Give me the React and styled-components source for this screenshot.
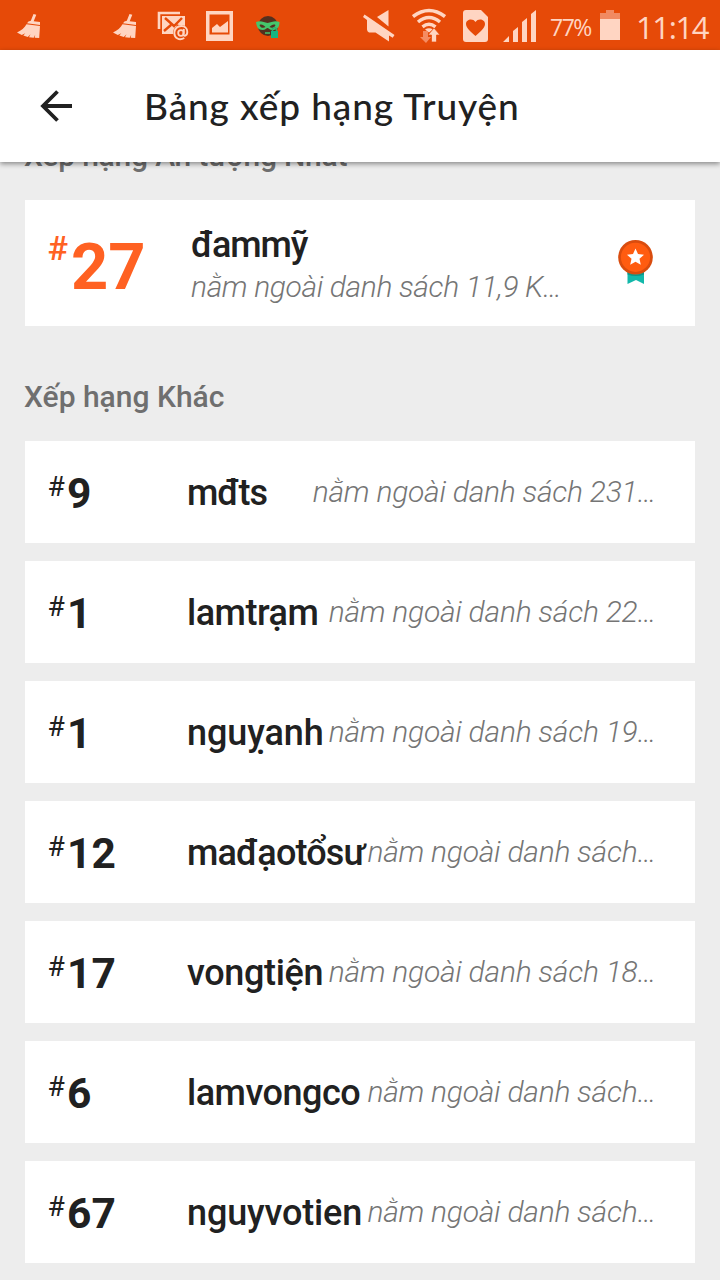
import React from "react";
import styled, { createGlobalStyle } from "styled-components";

const GlobalStyle = createGlobalStyle`
  * { box-sizing: border-box; }
  body { margin: 0; background: #ededed; font-family: Roboto, "Noto Sans", sans-serif; }
`;

const Screen = styled.div`
  width: 720px;
  height: 1280px;
  display: flex;
  flex-direction: column;
  overflow: hidden;
  background: #ededed;
  color: #212121;
`;

const StatusBar = styled.header`
  flex: none;
  height: 50px;
  padding: 0 12px 0 16px;
  display: flex;
  justify-content: space-between;
  background: #e64a08;
  color: #ffd5c2;
`;

const StatusGroup = styled.div`
  display: flex;
  align-items: flex-start;
`;

const StatusIcon = styled.svg`
  flex: none;
  display: block;
  margin-left: ${(p) => p.$gap || 0}px;
`;

const StatusText = styled.span`
  font-family: "Open Sans", "Noto Sans", sans-serif;
  font-size: ${(p) => p.$size}px;
  line-height: 54px;
  width: ${(p) => p.$width}px;
  margin-left: ${(p) => p.$gap}px;
  letter-spacing: ${(p) => p.$track}px;
  white-space: nowrap;
`;

const AppBar = styled.nav`
  flex: none;
  position: relative;
  z-index: 1;
  height: 112px;
  padding-left: 38px;
  display: flex;
  align-items: center;
  background: #fff;
  box-shadow: 0 2px 5px rgba(0, 0, 0, 0.42);
`;

const Title = styled.h1`
  margin: 0 0 0 70px;
  font-family: Lato, "Noto Sans", sans-serif;
  font-size: 37px;
  font-weight: 500;
  line-height: 48px;
  letter-spacing: 0.9px;
  white-space: nowrap;
`;

const Content = styled.main`
  flex: 1;
  min-height: 0;
  overflow: hidden;
  padding: 0 25px;
`;

const Section = styled.section`
  margin-top: ${(p) => p.$offset}px;
`;

const Heading = styled.h2`
  margin: 0 0 24px -1px;
  font-size: 30px;
  font-weight: 500;
  line-height: 40px;
  letter-spacing: ${(p) => p.$track || 0}px;
  color: #6f6f6f;
  white-space: nowrap;
`;

const List = styled.div`
  display: flex;
  flex-direction: column;
  gap: 18px;
`;

const Card = styled.article`
  height: ${(p) => (p.$featured ? 126 : 102)}px;
  padding: 0 ${(p) => (p.$featured ? 41 : 39)}px 0 23px;
  display: flex;
  align-items: center;
  background: #fff;
`;

const Rank = styled.div`
  flex: none;
  display: flex;
  align-items: flex-start;
  width: ${(p) => (p.$featured ? 143 : 139)}px;
  margin-top: ${(p) => (p.$featured ? 7 : 4)}px;
  color: ${(p) => (p.$featured ? "#ff6122" : "#212121")};
`;

const Hash = styled.span`
  width: ${(p) => (p.$featured ? 23 : 19)}px;
  padding-top: ${(p) => (p.$featured ? 0 : 1)}px;
  text-indent: -0.6px;
  font-size: ${(p) => (p.$featured ? 34 : 28)}px;
  line-height: ${(p) => (p.$featured ? 38 : 34)}px;
  font-weight: ${(p) => (p.$featured ? 500 : 400)};
`;

const Digits = styled.span`
  font-size: ${(p) => (p.$featured ? 65 : 42.5)}px;
  line-height: ${(p) => (p.$featured ? 76 : 50)}px;
  font-weight: 700;
`;

const Name = styled.div`
  flex: none;
  margin-top: ${(p) => (p.$featured ? 0 : 2)}px;
  font-size: 36px;
  font-weight: 500;
  line-height: 48px;
  white-space: nowrap;
  letter-spacing: ${(p) => p.$track || 0}px;
`;

const Note = styled.div`
  margin-left: ${(p) => (p.$featured ? 0 : "auto")};
  font-size: 30px;
  font-style: italic;
  font-weight: 300;
  line-height: 36px;
  white-space: nowrap;
  color: #757575;
  letter-spacing: ${(p) => (p.$featured ? -0.37 : -0.25)}px;
`;

const Story = styled.div`
  flex: 1;
  display: flex;
  flex-direction: column;
`;

const Broom = ({ gap }) => (
  <StatusIcon $gap={gap} width="26" height="50" viewBox="0 0 26 50" fill="currentColor">
    <path d="M17.500 14l2.800.8-2.600 6.400 6.300.8v3L11 23.300q1-2.500 3.800-2.600z" />
    <path d="M10.500 24.300L24 26l-.8 12-4.500-.2.500-3-1.500 3-4.700-.5 1.500-3-2.700 2.700-4.500-1.500 2-2.300-3.500 1.700L1 32.500c4.500-2 7.500-4.500 9.500-8.200z" />
  </StatusIcon>
);

const MailIcon = () => (
  <StatusIcon $gap={19} width="32" height="50" viewBox="0 0 32 50">
    <path d="M23 13H2v16" fill="none" stroke="currentColor" strokeWidth="2.6" />
    <path d="M5 16h23v18H5z" fill="currentColor" />
    <path d="M8 18l9 8 8-8M7 31l7-6M20 25l4 4" fill="none" stroke="#e64a08" strokeWidth="2.4" />
    <circle cx="24" cy="33" r="8" fill="#e64a08" />
    <circle cx="24" cy="33" r="2.8" fill="none" stroke="currentColor" strokeWidth="1.8" />
    <path d="M27 29l-.7 5c0 3 4 2 4-2 0-4-3-6-6-6-4 0-7 3-7 7 0 5 5 8 10 5" fill="none" stroke="currentColor" strokeWidth="1.9" />
  </StatusIcon>
);

const PictureIcon = () => (
  <StatusIcon $gap={17} width="28" height="50" viewBox="0 0 28 50">
    <path fill="currentColor" fillRule="evenodd" d="M0 11h27v30H0zM3.500 14.500v20h20v-20z" />
    <path fill="currentColor" d="M6 32.500v-4.500l5-4 3 3 8-6v11.500z" />
  </StatusIcon>
);

const MaskIcon = () => (
  <StatusIcon $gap={22} width="25" height="50" viewBox="0 0 25 50">
    <circle cx="12" cy="26" r="10" fill="#54301f" />
    <path d="M0 22c4-2 8 0 11.500 1 4-1 8-3 12-1 0 6-3 8-7 8-3 0-4-2-5-2s-2 2-5 2c-4 0-6-3-6.500-8z" fill="#45c66c" />
    <path d="M3.500 25c2-1 4 0 6 2-2 1.500-5 1-6-2zm10 2c2-2 4-3 6-2-1 3-4 3.500-6 2z" fill="#54301f" />
    <path d="M9 33h5" stroke="#45c66c" strokeWidth="1.500" />
    <path d="M16.500 31v-2q2-3 4 0v2" fill="none" stroke="#2fae70" strokeWidth="1.600" />
    <path d="M15 31h7v7h-7z" fill="#16b581" />
  </StatusIcon>
);

const MuteIcon = () => (
  <StatusIcon width="32" height="50" viewBox="0 0 32 50">
    <path d="M14 17l11.500-7v16.500z" fill="currentColor" />
    <path d="M1.500 14.500l3 2 27 18.500-1.800 2.800-3.700-2.300v6L12.500 32.500H6q-2-1-2-3V20L0 17z" fill="currentColor" />
  </StatusIcon>
);

const WifiIcon = () => (
  <StatusIcon $gap={17} width="34" height="50" viewBox="0 0 34 50">
    <g fill="none" stroke="currentColor" strokeWidth="3.500">
      <path d="M1 16.500q16-12 32 0M6 22q11-9 22 0M10.500 26.800q6.500-5 13 0" />
    </g>
    <path d="M13 29.500q4-2.500 8 0l-4 3z" fill="currentColor" />
    <path d="M11 31h5v6h3l-5 6-6-6h3z" fill="#f58c62" />
    <path d="M22 28l6 7h-3.500v7h-5v-7H16z" fill="currentColor" stroke="#e64a08" strokeWidth=".7" />
  </StatusIcon>
);

const SimIcon = () => (
  <StatusIcon $gap={17} width="25" height="50" viewBox="0 0 25 50">
    <path d="M3 10h15l7 7v22q0 3-3 3H3q-3 0-3-3V13q0-3 3-3z" fill="currentColor" />
    <path d="M12.500 36C8 32 3 28 3 24c0-5 7-6 9.500-2 2.500-4 9.500-3 9.500 2 0 4-5 8-9.500 12z" fill="#e64a08" />
  </StatusIcon>
);

const SignalIcon = () => (
  <StatusIcon $gap={15} width="33" height="50" viewBox="0 0 33 50" fill="currentColor">
    <path d="M0 42l6-6v6zM10 31l5-4v15h-5zM19 22l5-4v24h-5zM28 14l5-4v32h-5z" />
  </StatusIcon>
);

const BatteryIcon = () => (
  <StatusIcon $gap={8} width="20" height="50" viewBox="0 0 20 50">
    <path d="M0 13h6v-3h8v3h6v7H0z" fill="#f18a62" />
    <path d="M0 19h20v21H0z" fill="currentColor" />
  </StatusIcon>
);

const BackArrow = () => (
  <svg width="36" height="36" viewBox="0 0 36 36" fill="none" stroke="#212121" strokeWidth="3.800">
    <path d="M34 18H5M19.500 3.500L5 18l14.500 14.500" />
  </svg>
);

const MedalIcon = () => (
  <svg width="36" height="46" viewBox="0 0 36 46">
    <path d="M9.500 30h16.500v14L18 40l-8.500 4z" fill="#12b8aa" />
    <path d="M9.500 32q8.500 5 16.500 0v2.500q-8 3-16.500 0z" fill="#0d968a" />
    <circle cx="17.500" cy="17.300" r="17.300" fill="#d94c0e" />
    <circle cx="17.500" cy="17.300" r="14.600" fill="#ff5c10" />
    <path d="M17.500 8.500l2.500 5.600 6 .6-4.500 4.100 1.300 6-5.300-3.100-5.300 3.100 1.300-6L9 14.700l6-.6z" fill="#fff" />
  </svg>
);

const rankings = [
  { rank: 9, name: "mđts", track: -1, note: "nằm ngoài danh sách 231…" },
  { rank: 1, name: "lamtrạm", track: -0.5, note: "nằm ngoài danh sách 22…" },
  { rank: 1, name: "nguỵanh", track: -0.1, note: "nằm ngoài danh sách 19…" },
  { rank: 12, name: "mađạotổsư", track: -0.85, note: "nằm ngoài danh sách…" },
  { rank: 17, name: "vongtiện", track: -0.35, note: "nằm ngoài danh sách 18…" },
  { rank: 6, name: "lamvongco", track: -0.5, note: "nằm ngoài danh sách…" },
  { rank: 67, name: "nguyvotien", track: -0.15, note: "nằm ngoài danh sách…" },
];

const RankLabel = ({ value, featured }) => (
  <Rank $featured={featured}>
    <Hash $featured={featured}>#</Hash>
    <Digits $featured={featured}>{value}</Digits>
  </Rank>
);

export default function App() {
  return (
    <Screen>
      <GlobalStyle />
      <StatusBar>
        <StatusGroup>
          <Broom />
          <Broom gap={70} />
          <MailIcon />
          <PictureIcon />
          <MaskIcon />
        </StatusGroup>
        <StatusGroup>
          <MuteIcon />
          <WifiIcon />
          <SimIcon />
          <SignalIcon />
          <StatusText $size={23} $width={42} $gap={14} $track={-1.5}>77%</StatusText>
          <BatteryIcon />
          <StatusText $size={31} $width={72} $gap={16} $track={-1.4}>11:14</StatusText>
        </StatusGroup>
      </StatusBar>
      <AppBar>
        <BackArrow />
        <Title>Bảng xếp hạng Truyện</Title>
      </AppBar>
      <Content>
        <Section $offset={-26}>
          <Heading $track={-0.2}>Xếp hạng Ấn tượng Nhất</Heading>
          <Card $featured>
            <RankLabel value={27} featured />
            <Story>
              <Name $featured $track={-1.15}>đammỹ</Name>
              <Note $featured>nằm ngoài danh sách 11,9 K…</Note>
            </Story>
            <MedalIcon />
          </Card>
        </Section>
        <Section $offset={51}>
          <Heading>Xếp hạng Khác</Heading>
          <List>
            {rankings.map((r) => (
              <Card key={r.name}>
                <RankLabel value={r.rank} />
                <Name $track={r.track}>{r.name}</Name>
                <Note>{r.note}</Note>
              </Card>
            ))}
          </List>
        </Section>
      </Content>
    </Screen>
  );
}
